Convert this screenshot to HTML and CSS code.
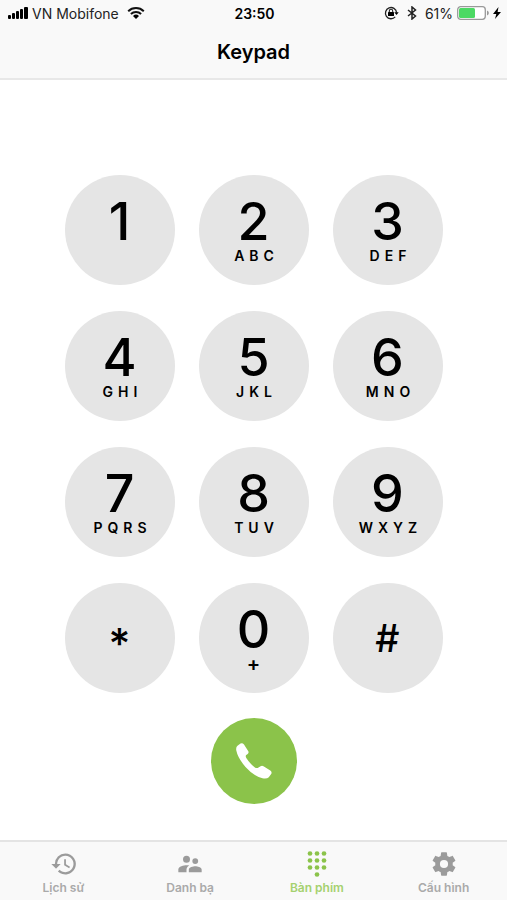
FILE: index.html
```
<!doctype html>
<html lang="vi">
<head>
<title>Keypad</title>
<meta charset="UTF-8">
<meta name="viewport" content="width=device-width, initial-scale=1.0">
<link rel="stylesheet" href="styles.css">
</head>
<body>
<header class="top">
<div class="status">
<div class="carrier">
<svg width="20" height="12" viewBox="0 0 20 12">
<rect x="0" y="8" width="3" height="4" rx="1"/>
<rect x="4" y="6" width="3" height="6" rx="1"/>
<rect x="8" y="4" width="3" height="8" rx="1"/>
<rect x="12" y="2" width="3" height="10" rx="1"/>
<rect x="16" y="0" width="4" height="12" rx="1"/>
</svg>
<span>VN Mobifone</span>
<svg class="wifi" width="18" height="12" viewBox="0 0 18 12">
<path d="M1.2 4.2a11.3 11.3 0 0 1 15.6 0M3.9 7a7.4 7.4 0 0 1 10.2 0" fill="none" stroke="#111" stroke-width="2"/>
<path d="M9 12L6 9a4.3 4.3 0 0 1 6 0z"/>
</svg>
</div>
<span class="time">23:50</span>
<div class="power">
<svg width="15" height="14" viewBox="0 0 15 14">
<path d="M11.2 10.900A5.600 5.600 0 1 1 12.600 6.500" fill="none" stroke="#222" stroke-width="1.300"/>
<path d="M10.300 6.300h4.400l-2.200 2.800z"/>
<rect x="4" y="6" width="6" height="4" rx=".5"/>
<path d="M5.300 6V4.900a1.700 1.700 0 0 1 3.400 0V6" fill="none" stroke="#222" stroke-width="1.100"/>
</svg>
<svg class="bluetooth" width="10" height="14" viewBox="0 0 10 14">
<path d="M1 4l7.500 6L5 13V1l3.500 3L1 10" fill="none" stroke="#222" stroke-width="1.500"/>
</svg>
<span>61%</span>
<svg width="32" height="14" viewBox="0 0 32 14">
<rect x=".7" y=".7" width="27.600" height="12.600" rx="3" fill="#fff" stroke="#999" stroke-width="1.300"/>
<rect x="2" y="2" width="16" height="10" rx="1.500" fill="#4cd964"/>
<path d="M30 4.500a2.600 2.600 0 0 1 0 5z" fill="#999"/>
</svg>
<svg class="bolt" width="8" height="12" viewBox="0 0 8 12"><path d="M5.500 0L0 7h3.300L2 12l6-7H4.600z"/></svg>
</div>
</div>
<h1>Keypad</h1>
</header>

<main>
<div class="pad">
<button class="key"><span class="digit">1</span></button>
<button class="key"><span class="digit">2</span><span class="letters">ABC</span></button>
<button class="key"><span class="digit">3</span><span class="letters">DEF</span></button>
<button class="key"><span class="digit">4</span><span class="letters">GHI</span></button>
<button class="key"><span class="digit">5</span><span class="letters">JKL</span></button>
<button class="key"><span class="digit">6</span><span class="letters">MNO</span></button>
<button class="key"><span class="digit">7</span><span class="letters">PQRS</span></button>
<button class="key"><span class="digit">8</span><span class="letters">TUV</span></button>
<button class="key"><span class="digit">9</span><span class="letters">WXYZ</span></button>
<button class="key star">*</button>
<button class="key"><span class="digit">0</span><span class="plus">+</span></button>
<button class="key hash">#</button>
</div>
<button class="call" aria-label="Call">
<svg width="38" height="38" viewBox="0 0 38 38"><path d="M2.500 3.800L5.500 1.600Q7.500.6 9 2.600L13.300 9.200Q14.200 11 12.400 12.200L11.200 13.100Q10.200 14.200 11.300 16Q14.500 21.200 19.600 25.200Q21.300 26.500 22.700 25.900L25.600 24.200Q27 23.400 28.500 24.200L35.300 28.500Q37.500 30.200 36 32.200L33.800 35.200Q31.800 37.200 27.500 36.300Q18.500 34 10.500 25Q2.800 16 1.300 8.500Q.7 5.300 2.500 3.800z" fill="#fff"/></svg>
</button>
</main>

<nav class="tabs">
<a href="#history">
<svg viewBox="-1 0 24 24"><path d="M13 3a9 9 0 0 0-9 9H1l3.890 3.890.07.14L9 12H6a7 7 0 1 1 2.060 4.940l-1.420 1.420A9 9 0 1 0 13 3zm-1 5v5l4.280 2.540.72-1.210-3.500-2.080V8z"/></svg>
<span>Lịch sử</span>
</a>
<a href="#contacts">
<svg viewBox="0 0 24 24"><path d="M16.500 12a2.500 2.500 0 1 0 0-5 2.500 2.500 0 0 0 0 5zM9 11a3 3 0 1 0 0-6 3 3 0 0 0 0 6zm7.500 3c-1.830 0-5.500.92-5.500 2.750V19h11v-2.250c0-1.830-3.670-2.750-5.500-2.750zM9 13c-2.330 0-7 1.170-7 3.500V19h7v-2.250c0-.85.33-2.340 2.370-3.470C10.500 13.100 9.660 13 9 13z"/></svg>
<span>Danh bạ</span>
</a>
<a href="#keypad" class="active">
<svg viewBox="0 0 24 24"><circle cx="6" cy="3" r="2"/><circle cx="12" cy="3" r="2"/><circle cx="18" cy="3" r="2"/><circle cx="6" cy="9" r="2"/><circle cx="12" cy="9" r="2"/><circle cx="18" cy="9" r="2"/><circle cx="6" cy="15" r="2"/><circle cx="12" cy="15" r="2"/><circle cx="18" cy="15" r="2"/><circle cx="12" cy="21" r="2"/></svg>
<span>Bàn phím</span>
</a>
<a href="#settings">
<svg viewBox="0 0 24 24"><path d="M19.430 12.980c.04-.32.07-.64.07-.98s-.03-.66-.07-.98l2.110-1.650c.19-.15.24-.42.12-.64l-2-3.460c-.12-.22-.39-.3-.61-.22l-2.490 1c-.52-.4-1.080-.73-1.690-.98l-.38-2.650C14.460 2.180 14.250 2 14 2h-4c-.25 0-.46.18-.49.42l-.38 2.650c-.61.25-1.170.59-1.690.98l-2.490-1c-.23-.09-.49 0-.61.22l-2 3.460c-.13.22-.07.49.12.64l2.110 1.650c-.04.32-.07.65-.07.98s.03.66.07.98l-2.110 1.650c-.19.15-.24.42-.12.64l2 3.460c.12.22.39.3.61.22l2.490-1c.52.4 1.080.73 1.690.98l.38 2.650c.03.24.24.42.49.42h4c.25 0 .46-.18.49-.42l.38-2.650c.61-.25 1.170-.59 1.690-.98l2.490 1c.23.09.49 0 .61-.22l2-3.460c.12-.22.07-.49-.12-.64zM12 15.500a3.500 3.500 0 1 1 0-7 3.500 3.500 0 0 1 0 7z"/></svg>
<span>Cấu hình</span>
</a>
</nav>
</body>
</html>
```
FILE: styles.css
```
* {box-sizing: border-box;}
body {margin: 0; min-height: 100vh; display: flex; flex-direction: column; background: #fff; color: #000; font-family: Inter, "Liberation Sans", sans-serif;}
button {border: 0; padding: 0; color: inherit; font-family: inherit; cursor: pointer;}

.top {background: #f9f9f9; border-bottom: 2px solid #e8e8e8;}
.status {display: grid; grid-template-columns: 1fr auto 1fr; align-items: center; height: 26px; padding: 0 6px 0 8px; font-size: 14px; color: #222;}
.carrier, .power {display: flex; align-items: center; gap: 4px;}
.carrier svg, .bolt {fill: #000;}
.carrier .wifi {margin-left: 4px;}
.power {justify-content: flex-end;}
.bluetooth {margin: 0 4px;}
.time {font-weight: 600; font-size: 14px; color: #000;}
h1 {margin: 0; padding: 8px 0; font-size: 20px; line-height: 36px; font-weight: 600; text-align: center;}

main {flex: 1; display: flex; flex-direction: column; align-items: center; padding: 95px 16px 36px;}
.pad {display: grid; grid-template-columns: repeat(3, 110px); gap: 26px 24px;}
.key {display: flex; flex-direction: column; align-items: center; height: 110px; padding-top: 21px; border-radius: 50%; background: #e5e5e5;}
.digit {font-size: 52px; line-height: 52px; font-weight: 500;}
.letters, .plus {font-size: 14px; line-height: 16px; font-weight: 600;}
.letters {letter-spacing: 5px; padding-left: 6px;}
.plus {font-size: 20px;}
.star, .hash {justify-content: center; padding: 0; font-size: 38px; line-height: 40px; font-weight: 500;}
.star {padding-top: 12px; font-size: 42px;}
.call {display: flex; align-items: center; justify-content: center; width: 86px; height: 86px; margin-top: 25px; border-radius: 50%; background: #8bc34a;}

.tabs {display: grid; grid-template-columns: repeat(4, 1fr); height: 61px; padding-top: 8px; background: #f9f9f9; border-top: 2px solid #e4e4e4;}
.tabs a {display: flex; flex-direction: column; align-items: center; gap: 2px; color: #9b9b9b; font-size: 12px; line-height: 16px; font-weight: 600; text-decoration: none;}
.tabs svg {width: 28px; height: 28px; fill: currentColor;}
.tabs span {color: #aaa;}
.tabs .active {color: #8bc34a;}
.tabs .active span {color: #a5d16f;}
```
